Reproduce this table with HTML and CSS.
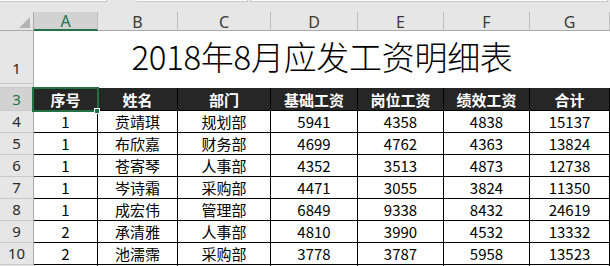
FILE: index.html
```html
<!DOCTYPE html>
<html lang="zh-CN">
<head>
<meta charset="utf-8">
<title>2018年8月应发工资明细表</title>
<link rel="stylesheet" href="styles.css">
</head>
<body>
<div class="app">
  <div class="topbar">
    <div class="box box-name"></div>
    <div class="box box-fx"></div>
    <div class="box box-formula"></div>
  </div>
  <div class="sheet">
    <div class="corner"><span class="tri"></span></div>
    <div class="colhead sel">A</div>
    <div class="colhead">B</div>
    <div class="colhead">C</div>
    <div class="colhead">D</div>
    <div class="colhead">E</div>
    <div class="colhead">F</div>
    <div class="colhead">G</div>

    <div class="rowhead r1">1</div>
    <div class="title">2018年8月应发工资明细表</div>

    <div class="rowhead r2"></div>
    <div class="blank"></div>

    <div class="rowhead sel">3</div>
    <div class="th">序号</div>
    <div class="th">姓名</div>
    <div class="th">部门</div>
    <div class="th">基础工资</div>
    <div class="th">岗位工资</div>
    <div class="th">绩效工资</div>
    <div class="th">合计</div>

    <div class="rowhead">4</div>
    <div class="td">1</div><div class="td">贲靖琪</div><div class="td">规划部</div><div class="td">5941</div><div class="td">4358</div><div class="td">4838</div><div class="td">15137</div>

    <div class="rowhead">5</div>
    <div class="td">1</div><div class="td">布欣嘉</div><div class="td">财务部</div><div class="td">4699</div><div class="td">4762</div><div class="td">4363</div><div class="td">13824</div>

    <div class="rowhead">6</div>
    <div class="td">1</div><div class="td">苍寄琴</div><div class="td">人事部</div><div class="td">4352</div><div class="td">3513</div><div class="td">4873</div><div class="td">12738</div>

    <div class="rowhead">7</div>
    <div class="td">1</div><div class="td">岑诗霜</div><div class="td">采购部</div><div class="td">4471</div><div class="td">3055</div><div class="td">3824</div><div class="td">11350</div>

    <div class="rowhead">8</div>
    <div class="td">1</div><div class="td">成宏伟</div><div class="td">管理部</div><div class="td">6849</div><div class="td">9338</div><div class="td">8432</div><div class="td">24619</div>

    <div class="rowhead">9</div>
    <div class="td">2</div><div class="td">承清雅</div><div class="td">人事部</div><div class="td">4810</div><div class="td">3990</div><div class="td">4532</div><div class="td">13332</div>

    <div class="rowhead">10</div>
    <div class="td">2</div><div class="td">池濡霈</div><div class="td">采购部</div><div class="td">3778</div><div class="td">3787</div><div class="td">5958</div><div class="td">13523</div>

    <div class="rowhead"></div>
    <div class="td"></div><div class="td"></div><div class="td"></div><div class="td"></div><div class="td"></div><div class="td"></div><div class="td"></div>

    <div class="selection"><span class="handle"></span></div>
  </div>
</div>
</body>
</html>
```

FILE: styles.css
```css
html, body {
  margin: 0;
  padding: 0;
  background: #e6e6e6;
}
body {
  width: 610px;
  height: 266px;
  overflow: hidden;
  font-family: "Noto Sans CJK SC", "Noto Sans", sans-serif;
}
.app {
  display: flex;
  flex-direction: column;
}
.topbar {
  height: 12px;
  display: flex;
  align-items: flex-start;
}
.box {
  box-sizing: border-box;
  height: 2px;
  background: #fff;
  border-bottom: 1px solid #c6c6c6;
  border-right: 1px solid #c6c6c6;
}
.box-name { width: 107px; }
.box-fx { width: 111px; margin-left: 30px; }
.box-formula { width: 358px; margin-left: 2px; border-left: 1px solid #c6c6c6; }

.sheet {
  position: relative;
  display: grid;
  grid-template-columns: 34px 64px 80px 93px 87px 86px 86px 80px;
  grid-template-rows: 19px 53px 4px 23px repeat(8, 22px);
}
.sheet > div {
  box-sizing: border-box;
}
.corner {
  position: relative;
  background: #e6e6e6;
  border-right: 1px solid #ababab;
  border-bottom: 1px solid #ababab;
}
.tri {
  position: absolute;
  right: 3px;
  bottom: 2px;
  width: 0;
  height: 0;
  border-style: solid;
  border-width: 0 0 11px 11px;
  border-color: transparent transparent #b4b4b4 transparent;
}
.colhead {
  display: flex;
  align-items: center;
  justify-content: center;
  background: #e6e6e6;
  border-right: 1px solid #bdbdbd;
  border-bottom: 1px solid #ababab;
  font-family: "Noto Sans", sans-serif;
  font-size: 16px;
  color: #3a3a3a;
  line-height: 1;
  padding-top: 1px;
}
.colhead.sel {
  background: #d2d2d2;
  color: #217346;
  border-bottom: 2px solid #217346;
}
.rowhead {
  display: flex;
  align-items: center;
  justify-content: center;
  background: #e6e6e6;
  border-right: 1px solid #ababab;
  border-bottom: 1px solid #c8c8c8;
  font-family: "Noto Sans", sans-serif;
  font-size: 15px;
  color: #2a2a2a;
  line-height: 1;
}
.rowhead.r1 {
  align-items: flex-end;
  padding-bottom: 7px;
}
.rowhead.sel {
  background: #d2d2d2;
  color: #217346;
}
.title {
  grid-column: span 7;
  display: flex;
  align-items: center;
  justify-content: center;
  background: #fff;
  font-size: 33px;
  font-weight: 300;
  line-height: 1;
  color: #000;
  padding-bottom: 3px;
  letter-spacing: -0.3px;
}
.blank {
  grid-column: span 7;
  background: #fff;
}
.th {
  display: flex;
  align-items: center;
  justify-content: center;
  background: #262626;
  color: #fff;
  font-weight: bold;
  font-size: 15px;
  line-height: 1;
  border-right: 1px solid #000;
  border-bottom: 1px solid #000;
}
.td {
  display: flex;
  align-items: center;
  justify-content: center;
  background: #fff;
  color: #000;
  font-size: 15px;
  line-height: 1;
  border-right: 1px solid #000;
  border-bottom: 1px solid #000;
}
.selection {
  position: absolute;
  left: 32px;
  top: 75px;
  width: 67px;
  height: 25px;
  border: 2px solid #217346;
  box-sizing: border-box;
  pointer-events: none;
}
.handle {
  position: absolute;
  right: -3px;
  bottom: -4px;
  width: 6px;
  height: 6px;
  box-sizing: border-box;
  background: #217346;
  border: 1px solid #fff;
}
```
